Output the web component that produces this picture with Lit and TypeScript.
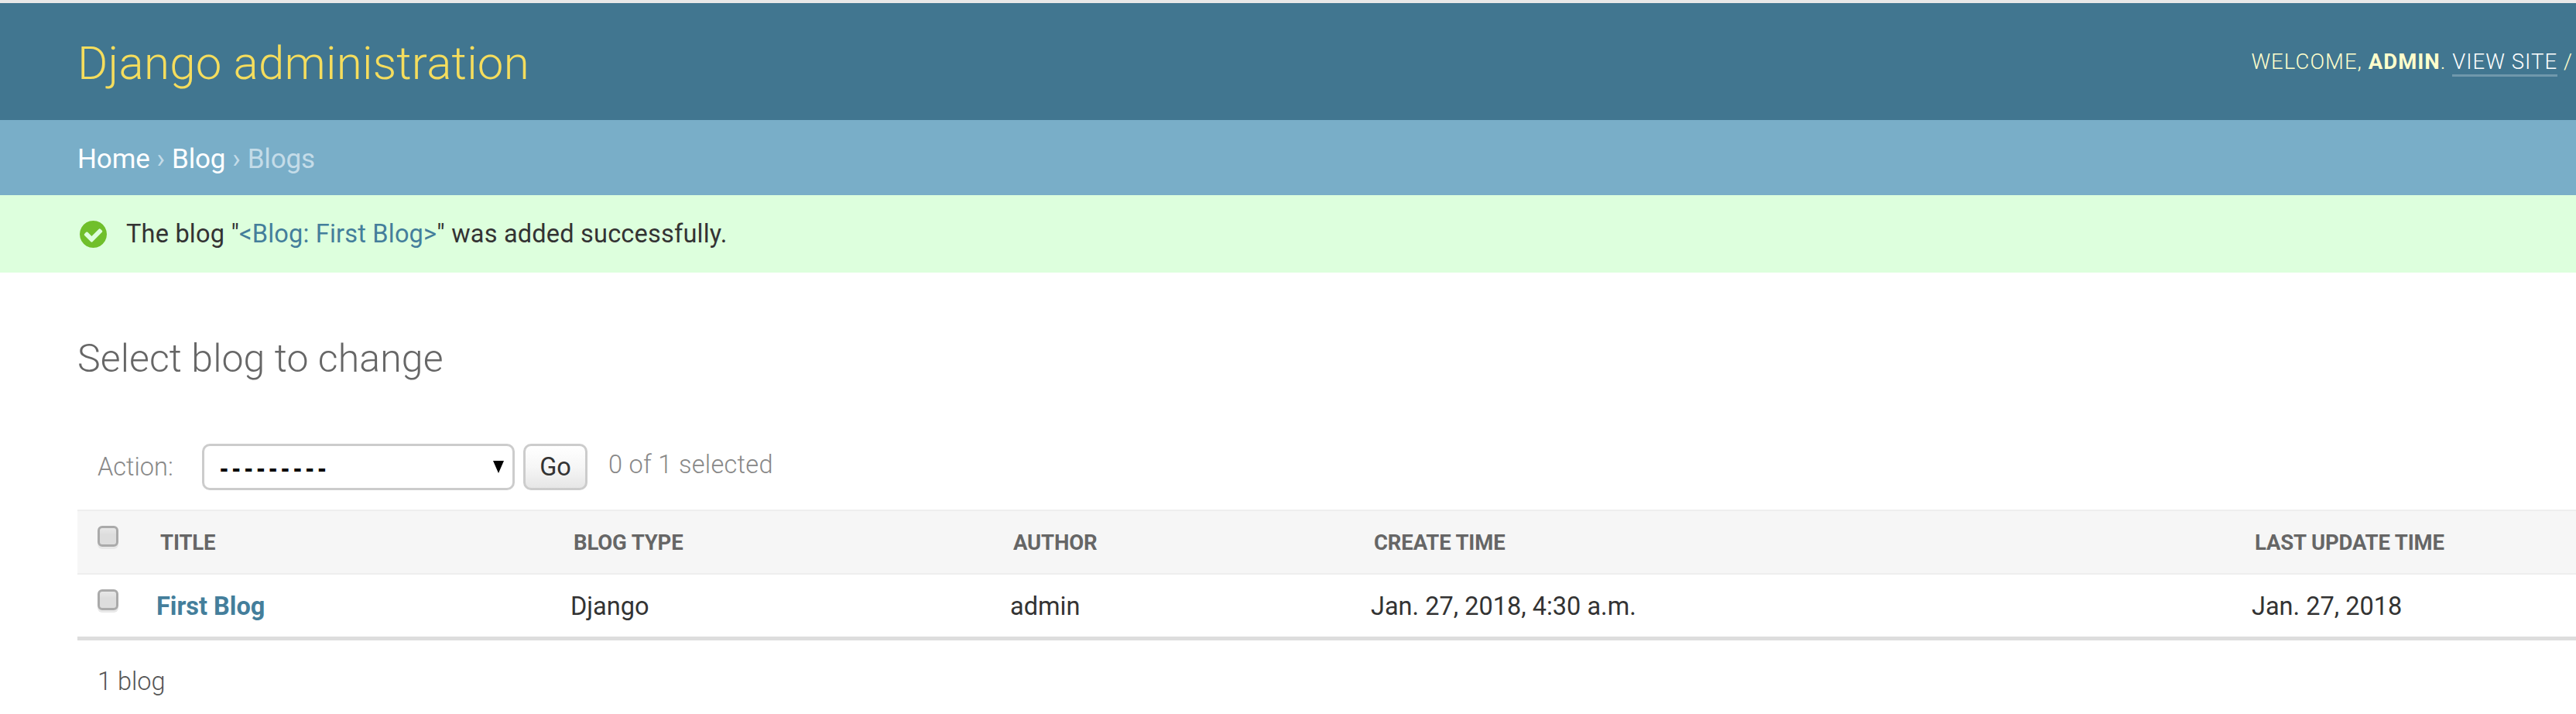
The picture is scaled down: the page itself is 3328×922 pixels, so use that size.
import { LitElement, html, css } from "lit";
import { customElement } from "lit/decorators.js";

@customElement("app-root")
export class AppRoot extends LitElement {
  static styles = css`
    :host { display: block; width: 3328px; height: 922px; overflow: hidden; background: #fff; font-family: Roboto, "Liberation Sans", sans-serif; font-weight: 300; color: #333; }
    a { text-decoration: none; }
    .topline { height: 4px; background: #e8e8e8; }
    .header { height: 151px; box-sizing: border-box; background: #417690; display: flex; justify-content: space-between; align-items: center; padding: 4px 4px 0 100px; }
    .brand { font-size: 60px; font-weight: 300; letter-spacing: .25px; color: #f5dd5d; margin: 0; }
    .tools { font-size: 27.5px; letter-spacing: 1.05px; text-transform: uppercase; color: #ffc; white-space: nowrap; margin-bottom: 4px; }
    .tools strong { font-weight: 700; }
    .tools a { color: #fff; border-bottom: 3px solid rgba(255,255,255,.25); }
    .crumbs { height: 97px; box-sizing: border-box; background: #79aec8; color: #c4dce8; font-size: 35px; font-weight: 400; letter-spacing: -.15px; padding: 3px 0 0 100px; display: flex; align-items: center; gap: 9px; }
    .crumbs a { color: #fff; }
    .msg { height: 100px; box-sizing: border-box; background: #dfd; font-size: 32.5px; font-weight: 400; letter-spacing: .2px; padding-left: 103px; display: flex; align-items: center; gap: 25px; color: #333; }
    .msg a { color: #447e9b; }
    .msg svg { width: 35px; height: 35px; flex: none; }
    .content { padding: 0 0 0 100px; }
    h1.title { margin: 0; padding-top: 81px; font-size: 50px; line-height: 60px; font-weight: 300; letter-spacing: .1px; color: #666; }
    .actions { display: flex; align-items: center; height: 60px; margin-top: 80px; padding-left: 26px; font-size: 32.5px; color: #888; }
    .actions label { width: 135px; }
    .select { width: 404px; height: 60px; box-sizing: border-box; border: 3px solid #ccc; border-radius: 10px; background: #fff; display: flex; align-items: center; justify-content: space-between; padding: 0 11px 0 20px; font-family: "Liberation Sans", sans-serif; font-weight: 700; font-size: 32.5px; color: #000; }
    .dashes { letter-spacing: 5px; padding-top: 5px; }
    .arrow { width: 0; height: 0; border: 7px solid transparent; border-top: 16px solid #000; border-bottom: 0; }
    .go { width: 83px; height: 60px; box-sizing: border-box; margin-left: 11px; border: 3px solid #ccc; border-radius: 10px; background: linear-gradient(#fff, #f6f6f6 50%, #e6e6e6); display: flex; align-items: center; justify-content: center; font-size: 32.5px; font-weight: 400; color: #333; }
    .count { margin-left: 27px; margin-bottom: 6px; letter-spacing: .3px; color: #888; }
    .table { width: 3400px; margin-top: 25px; display: grid; grid-template-columns: 96px 535px 568px 466px 1138px 1fr; }
    .cell { box-sizing: border-box; display: flex; align-items: center; white-space: nowrap; }
    .th { height: 84px; background: #f6f6f6; border-top: 2px solid #eee; border-bottom: 2px solid #eee; font-size: 27.5px; font-weight: 700; letter-spacing: -.15px; color: #666; text-transform: uppercase; padding-left: 10px; }
    .th.first { padding-left: 11px; }
    .td { height: 85px; border-bottom: 5px solid #ddd; font-size: 32.5px; font-weight: 400; color: #333; padding-left: 6px; padding-top: 2px; }
    .td a { color: #447e9b; font-weight: 700; }
    .check { padding: 0 0 15px 26px; }
    .box { width: 27px; height: 27px; box-sizing: border-box; background: linear-gradient(#e8e8e8, #ddd 40%); border: 3px solid #aaa; border-radius: 6px; box-shadow: 0 3px 0 #e8e8e8; }
    .paginator { padding: 34px 0 0 26px; font-size: 32.5px; color: #555; }
  `;

  render() {
    return html`
      <div class="topline"></div>
      <div class="header">
        <h1 class="brand">Django administration</h1>
        <div class="tools">Welcome, <strong>admin</strong>. <a>View site</a> /</div>
      </div>
      <div class="crumbs"><a>Home</a><span>›</span><a>Blog</a><span>›</span><span>Blogs</span></div>
      <div class="msg">
        <svg viewBox="128 128 1536 1536"><path fill="#70bf2b" d="M1412 734q0-28-18-46l-91-90q-19-19-45-19t-45 19l-408 407-226-226q-19-19-45-19t-45 19l-91 90q-18 18-18 46 0 27 18 45l362 362q19 19 45 19 27 0 46-19l543-543q18-18 18-45zm252 162q0 209-103 385.500t-279.500 279.500-385.500 103-385.500-103-279.500-279.500-103-385.500 103-385.500 279.500-279.500 385.500-103 385.500 103 279.500 279.500 103 385.500z"/></svg>
        <span>The blog "<a>&lt;Blog: First Blog&gt;</a>" was added successfully.</span>
      </div>
      <div class="content">
        <h1 class="title">Select blog to change</h1>
        <div class="actions">
          <label>Action:</label>
          <div class="select"><span class="dashes">---------</span><span class="arrow"></span></div>
          <div class="go">Go</div>
          <span class="count">0 of 1 selected</span>
        </div>
        <div class="table">
          <div class="cell th check"><div class="box"></div></div>
          <div class="cell th first">Title</div>
          <div class="cell th">Blog type</div>
          <div class="cell th">Author</div>
          <div class="cell th">Create time</div>
          <div class="cell th">Last update time</div>
          <div class="cell td check"><div class="box"></div></div>
          <div class="cell td"><a>First Blog</a></div>
          <div class="cell td">Django</div>
          <div class="cell td">admin</div>
          <div class="cell td">Jan. 27, 2018, 4:30 a.m.</div>
          <div class="cell td">Jan. 27, 2018</div>
        </div>
        <div class="paginator">1 blog</div>
      </div>
    `;
  }
}
